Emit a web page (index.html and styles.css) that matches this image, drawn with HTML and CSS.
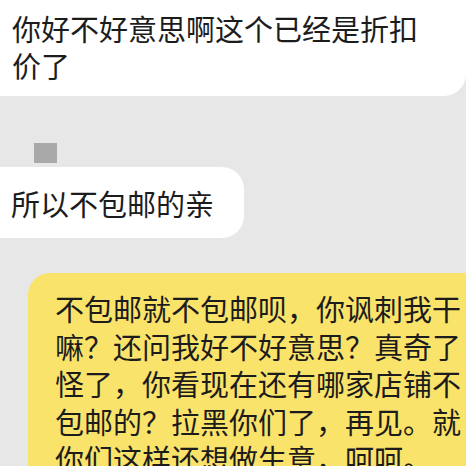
FILE: index.html
```html
<!DOCTYPE html>
<html lang="zh-CN">
<head>
    <meta charset="UTF-8">
    <meta name="viewport" content="width=device-width, initial-scale=1.0">
    <title>聊天记录</title>
    <link rel="stylesheet" href="styles.css">
</head>
<body>
    <div class="chat">
        <div class="msg msg-first">
            <div class="bubble bubble-wide">你好不好意思啊这个已经是折扣价了</div>
        </div>

        <div class="msg msg-second">
            <div class="avatar"></div>
            <div class="bubble bubble-short">所以不包邮的亲</div>
        </div>

        <div class="msg msg-mine">
            <div class="bubble bubble-yellow">不包邮就不包邮呗，你讽刺我干嘛？还问我好不好意思？真奇了怪了，你看现在还有哪家店铺不包邮的？拉黑你们了，再见。就你们这样还想做生意，呵呵。</div>
        </div>
    </div>
</body>
</html>
```

FILE: styles.css
```css
body {
    margin: 0;
    padding: 0;
    width: 466px;
    height: 466px;
    overflow: hidden;
    background-color: #e7e7e7;
    font-family: "Noto Sans CJK SC", "Noto Sans", sans-serif;
    color: #1c1c1c;
}

.chat {
    display: flex;
    flex-direction: column;
}

.msg {
    display: flex;
    flex-direction: column;
    align-items: flex-start;
}

.bubble {
    background-color: #fff;
    font-size: 29px;
    line-height: 37px;
    border-radius: 22px;
    box-sizing: border-box;
}

.bubble-wide {
    width: 466px;
    padding: 10px 30px 12px 12px;
    border-radius: 0 0 22px 0;
}

.msg-second {
    margin-top: 47px;
}

.avatar {
    width: 23px;
    height: 20px;
    margin-left: 34px;
    margin-bottom: 4px;
    background-color: #a9a9a9;
}

.bubble-short {
    padding: 18px 30px 16px 11px;
    border-radius: 0 22px 22px 0;
}

.msg-mine {
    margin-top: 35px;
    margin-left: 28px;
}

.bubble-yellow {
    flex-shrink: 0;
    width: 467px;
    padding: 17px 30px 20px 27px;
    line-height: 37.5px;
    background-color: #fae36b;
}
```
